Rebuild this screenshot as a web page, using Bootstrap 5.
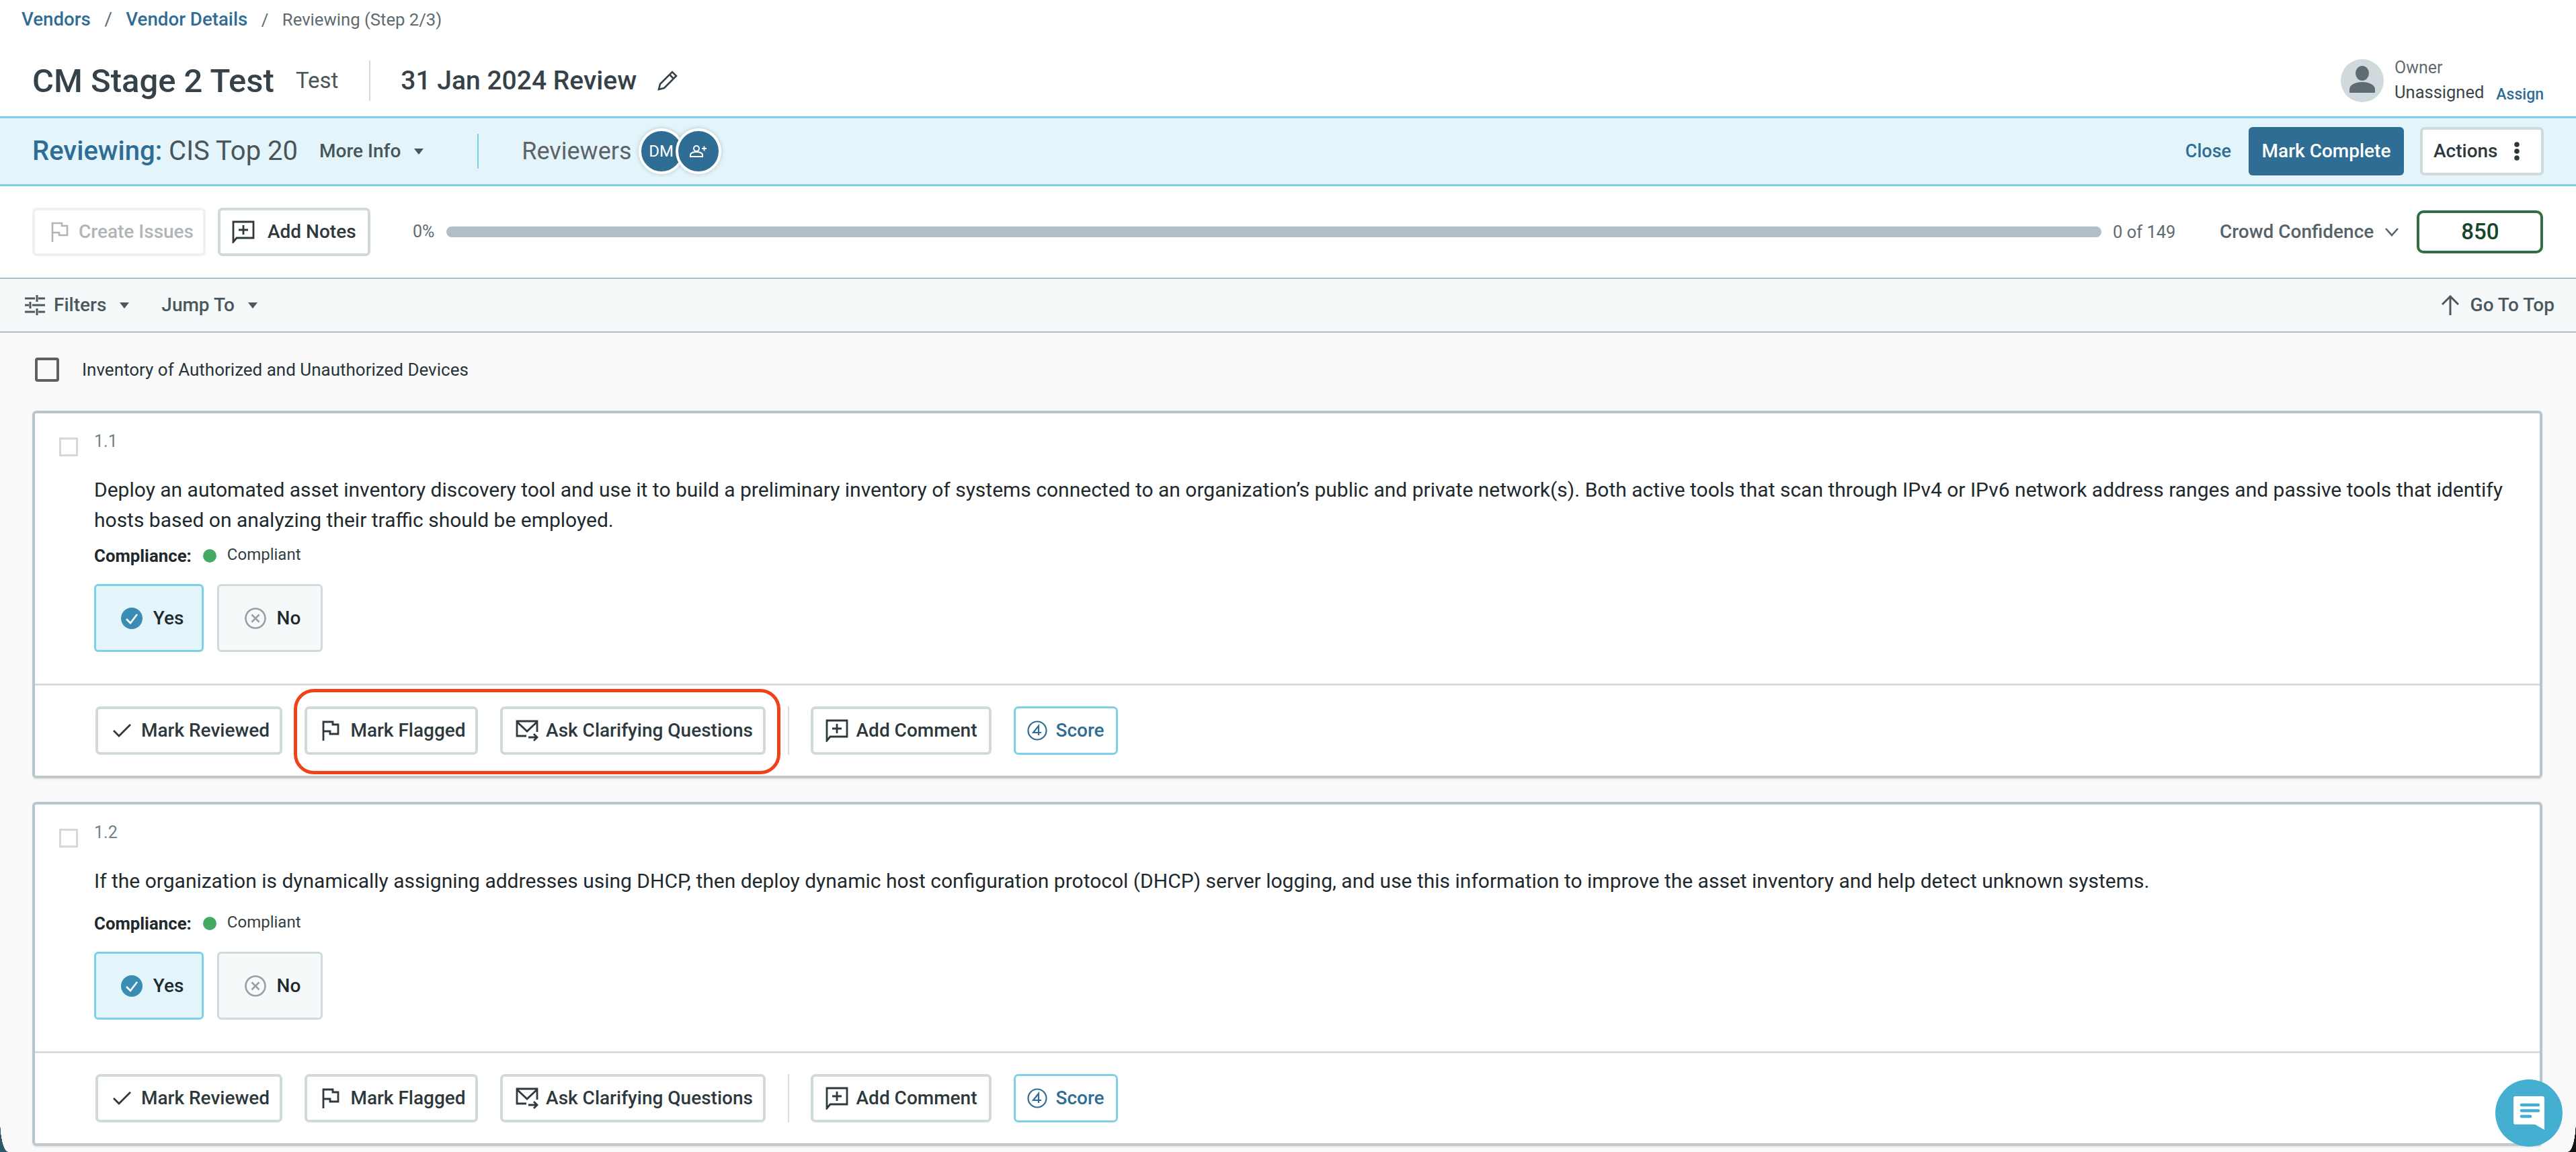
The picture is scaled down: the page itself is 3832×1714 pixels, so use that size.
<!DOCTYPE html>
<html lang="en">
<head>
  <meta charset="UTF-8">
  <title>Reviewing</title>
  <link href="https://cdn.jsdelivr.net/npm/bootstrap@5.3.0/dist/css/bootstrap.min.css" rel="stylesheet">
  <style>
    html, body { height: 100%; }
    body { font-family: Roboto, "Liberation Sans", sans-serif; background: #f9f9f9; color: #1f2a2e; overflow: hidden; font-size: 28px; position: relative; }
    a { text-decoration: none; color: #2f6d95; }
    .top-strip { background: #fff; padding: 0 48px; height: 173px; }
    .crumbs { height: 58px; margin-left: -16px; font-size: 27.7px; }
    .crumbs .breadcrumb { --bs-breadcrumb-margin-bottom: 0; --bs-breadcrumb-divider-color: #5c6b72; --bs-breadcrumb-item-active-color: #5f6b70; --bs-breadcrumb-item-padding-x: 20.5px; }
    .crumbs a { font-weight: 500; }
    .crumbs .active { font-size: 25.7px; line-height: 42px; }
    .title-line { height: 104px; margin-top: 10px; }
    .title-main { font-size: 49px; font-weight: 500; color: #36424a; margin: 0; line-height: 1; }
    .title-sub { font-size: 33px; color: #4a555a; margin-left: 32px; }
    .title-rule { width: 2px; height: 60px; background: #d5d9db; margin: 0 45px 0 46px; }
    .title-date { font-size: 39px; font-weight: 500; color: #36424a; }
    .title-pen { margin-left: 30px; }
    .owner-pic { width: 64px; height: 64px; background: #d0dadd; }
    .owner-label { font-size: 25px; color: #5f6b70; line-height: 36px; }
    .owner-name { font-size: 25.5px; color: #3a464b; line-height: 36px; }
    .assign-link { font-size: 23px; font-weight: 500; margin-left: 18px; position: relative; top: 2px; }
    .review-band { height: 104px; background: #e3f5fa; border-top: 3px solid #7dd0e6; border-bottom: 3px solid #7dd0e6; padding: 0 48px 0 48px; }
    .review-label { font-size: 40px; color: #4a555a; }
    .review-label b { font-weight: 500; color: #2f6d95; }
    .more-info { font-size: 28px; font-weight: 500; color: #4a555a; margin-left: 32px; }
    .down-caret { width: 0; height: 0; border-left: 7px solid transparent; border-right: 7px solid transparent; border-top: 9px solid currentColor; display: inline-block; margin-left: 20px; }
    .band-rule { width: 2px; height: 52px; background: #7dd0e6; margin: 0 64px 0 80px; }
    .reviewers-label { font-size: 36px; color: #5d6366; }
    .rev-stack { margin-left: 10px; }
    .rev-dot { width: 68px; height: 68px; background: #2f6d95; color: #fff; border: 4px solid #fff; font-size: 24px; box-shadow: 0 0 6px rgba(0,0,0,.2); }
    .rev-dot + .rev-dot { margin-left: -13px; }
    .close-link { font-size: 27px; font-weight: 500; margin-right: 26px; }
    .plain-btn { font-family: inherit; font-size: 28px; font-weight: 500; color: #2e393e; background: #fff; border: 4px solid #d0dadd; border-radius: 7px; height: 72px; line-height: 1; padding: 0 18px; white-space: nowrap; }
    .plain-btn svg { flex: none; }
    .blue-btn { background: #2f6d95; color: #fff; border: 0; border-radius: 6px; height: 72px; width: 231px; font-size: 28px; font-weight: 500; }
    .actions-btn { width: 184px; margin-left: 24px; padding: 0 0 0 16px; gap: 24px; }
    .tool-row { height: 136px; background: #fff; padding: 0 48px; }
    .faded-btn { width: 258px; color: #b0b5b8; border-color: #eef1f2; padding-left: 24px; gap: 15px; }
    .notes-btn { width: 227px; margin-left: 18px; padding-left: 17px; gap: 19px; }
    .pct-text { font-size: 25px; color: #5f6b70; margin-left: 63px; width: 50px; }
    .prog-track { height: 16px; width: 2462px; background: #b0bfc7; border-radius: 8px; }
    .count-text { font-size: 25.5px; color: #5f6b70; margin-left: 17px; width: 159px; white-space: nowrap; }
    .crowd-text { font-size: 28px; font-weight: 500; color: #55636a; white-space: nowrap; }
    .score-box { width: 188px; height: 64px; border: 4px solid #2e7040; border-radius: 10px; font-size: 33px; font-weight: 500; color: #17452a; margin-left: 26px; }
    .filter-row { height: 82px; background: #f5f9fa; border-top: 2px solid #b0bfc7; border-bottom: 2px solid #b0bfc7; padding: 0 32px 0 37px; font-size: 28px; font-weight: 500; color: #4b585e; }
    .filter-ico { margin-right: 13px; }
    .group-row { height: 116px; padding: 0 0 6px 52px; font-size: 26px; color: #27343a; }
    .group-box { width: 36px; height: 36px; border: 4px solid #5a6063; border-radius: 4px; margin-right: 34px; }
    .req-card { background: #fff; margin: 0 50px 35px 48px; border: 4px solid #b8c5cc; border-bottom-color: #c0c7ca; border-radius: 6px; box-shadow: 0 2px 2px rgba(0,0,0,.08); }
    .req-body { padding: 24px 40px 0 36px; height: 402px; }
    .req-body.short-body { height: 367px; }
    .req-body.short-body .comp-line { margin-top: 18px; }
    .req-box { width: 28px; height: 28px; border: 3px solid #d5d8da; margin-top: 12px; flex: none; }
    .req-num { font-size: 25px; color: #71838d; margin-left: 24px; line-height: 36px; }
    .req-text { font-size: 30px; line-height: 45px; color: #1f2a2e; margin: 27px 0 0 52px; }
    .comp-line { margin: 8px 0 0 52px; height: 46px; }
    .comp-label { font-size: 25.8px; font-weight: 700; color: #1f2a2e; }
    .comp-dot { width: 20px; height: 20px; background: #43ab61; margin: 0 16px 0 17px; }
    .comp-value { font-size: 24px; color: #333f44; position: relative; top: -2px; }
    .answer-row { margin: 19px 0 0 52px; gap: 20px; }
    .answer-btn { height: 101px; font-size: 28px; font-weight: 500; color: #1f2a2e; border-radius: 6px; gap: 16px; padding: 0; }
    .yes-btn { width: 163px; background: #e3f5fa; border: 3px solid #7dd0e6; padding-left: 10px; }
    .no-btn { width: 157px; background: #f5f9fa; border: 3px solid #d0dadd; padding-left: 8px; }
    .req-foot { border-top: 3px solid #d9dcdd; height: 137px; padding: 31px 0 0 90px; }
    .foot-btn { height: 72px; gap: 12px; padding: 0; justify-content: center; }
    .foot-rule { width: 2px; height: 72px; background: #d9dcdd; margin: 0 32px 0 33px; }
    .w-reviewed { width: 278px; margin-right: 33px; padding-left: 7px; gap: 15px; }
    .w-flagged { width: 258px; margin-right: 33px; padding-left: 8px; gap: 16px; }
    .w-ask { width: 395px; padding-left: 4px; gap: 11px; }
    .w-comment { width: 269px; margin-right: 34px; }
    .w-score { width: 155px; border: 3px solid #7dd0e6; color: #2f6d95; margin-left: -1px; }
    .red-ring { position: absolute; left: 437px; top: 1025px; width: 724px; height: 127px; border: 5px solid #f0411a; border-radius: 30px; pointer-events: none; }
    .chat-fab { position: absolute; left: 3712px; top: 1606px; width: 100px; height: 100px; background: #45afd2; }
    .win-corner { position: absolute; bottom: 0; width: 12px; height: 48px; }
    .win-corner.left-c { left: 0; background: radial-gradient(ellipse 12px 48px at 100% 0, transparent 98%, #2c5a6a 100%); }
    .win-corner.right-c { right: 0; background: radial-gradient(ellipse 12px 48px at 0 0, transparent 98%, #111 100%); }
  </style>
</head>
<body>
  <div class="top-strip">
    <nav class="crumbs d-flex align-items-center">
      <ol class="breadcrumb align-items-center">
        <li class="breadcrumb-item"><a href="#">Vendors</a></li>
        <li class="breadcrumb-item"><a href="#">Vendor Details</a></li>
        <li class="breadcrumb-item active">Reviewing (Step 2/3)</li>
      </ol>
    </nav>
    <div class="title-line d-flex align-items-center justify-content-between">
      <div class="d-flex align-items-center">
        <h1 class="title-main">CM Stage 2 Test</h1>
        <span class="title-sub">Test</span>
        <span class="title-rule"></span>
        <span class="title-date">31 Jan 2024 Review</span>
        <svg class="title-pen" width="32" height="32" viewBox="0 0 32 32" fill="none" stroke="#36424a" stroke-width="2.6"><path d="M3 29l2-8L23 3l6 6L11 27z"/><path d="M19 7l6 6"/></svg>
      </div>
      <div class="d-flex align-items-center">
        <span class="owner-pic rounded-circle d-flex align-items-center justify-content-center me-3">
          <svg width="40" height="44" viewBox="0 0 40 44" fill="#5f6d72"><ellipse cx="20" cy="11" rx="10" ry="11"/><path d="M1 40v-5c0-7 9-11 19-11s19 4 19 11v5z"/></svg>
        </span>
        <div>
          <div class="owner-label">Owner</div>
          <div class="owner-name">Unassigned<a class="assign-link" href="#">Assign</a></div>
        </div>
      </div>
    </div>
  </div>

  <div class="review-band d-flex align-items-center justify-content-between">
    <div class="d-flex align-items-center">
      <span class="review-label"><b>Reviewing:</b> CIS Top 20</span>
      <span class="more-info d-flex align-items-center">More Info<i class="down-caret"></i></span>
      <span class="band-rule"></span>
      <span class="reviewers-label">Reviewers</span>
      <div class="rev-stack d-flex">
        <span class="rev-dot rounded-circle d-flex align-items-center justify-content-center">DM</span>
        <span class="rev-dot rounded-circle d-flex align-items-center justify-content-center">
          <svg width="25" height="18" viewBox="0 0 25 18" fill="none" stroke="#fff" stroke-width="2"><circle cx="10" cy="5" r="4"/><path d="M1 17v-3c0-2 4-4 9-4s9 2 9 4v3z"/><path d="M18 5h7M21.500 1.500v7"/></svg>
        </span>
      </div>
    </div>
    <div class="d-flex align-items-center">
      <a class="close-link" href="#">Close</a>
      <button class="blue-btn" type="button">Mark Complete</button>
      <button class="plain-btn actions-btn d-flex align-items-center" type="button">Actions
        <svg width="8" height="28" viewBox="0 0 8 28" fill="#2e393e"><circle cx="4" cy="4" r="3.800"/><circle cx="4" cy="14" r="3.800"/><circle cx="4" cy="24" r="3.800"/></svg>
      </button>
    </div>
  </div>

  <div class="tool-row d-flex align-items-center">
    <button class="plain-btn faded-btn d-flex align-items-center" type="button" disabled>
      <svg width="26" height="30" viewBox="0 0 26 30" fill="none" stroke="#b0b5b8" stroke-width="2.6"><path d="M2 30V2h14v4h8v14H12v-4H2"/></svg>
      Create Issues
    </button>
    <button class="plain-btn notes-btn d-flex align-items-center" type="button">
      <svg width="34" height="34" viewBox="0 0 34 34" fill="none" stroke="#2e393e" stroke-width="2.8"><path d="M2 32V2h30v24H7z"/><path d="M17 7v14M10 14h14"/></svg>
      Add Notes
    </button>
    <span class="pct-text">0%</span>
    <div class="prog-track"></div>
    <span class="count-text">0 of 149</span>
    <span class="crowd-text">Crowd Confidence</span>
    <svg class="ms-3" width="22" height="14" viewBox="0 0 22 14" fill="none" stroke="#55636a" stroke-width="2.6"><path d="M2 2l9 10 9-10"/></svg>
    <span class="score-box d-flex align-items-center justify-content-center">850</span>
  </div>

  <div class="filter-row d-flex align-items-center justify-content-between">
    <div class="d-flex align-items-center">
      <svg class="filter-ico" width="30" height="30" viewBox="0 0 30 30" fill="none" stroke="#4b585e" stroke-width="3"><path d="M0 5h15M20 5h10M18 0v10M0 15h6M11 15h19M8 10v10M0 25h15M20 25h10M18 20v10"/></svg>
      <span>Filters</span><i class="down-caret"></i>
      <span class="ms-5">Jump To</span><i class="down-caret"></i>
    </div>
    <div class="d-flex align-items-center">
      <svg class="me-3" width="28" height="30" viewBox="0 0 28 30" fill="none" stroke="#4b585e" stroke-width="3"><path d="M14 30V3M2 14L14 2l12 12"/></svg>
      <span>Go To Top</span>
    </div>
  </div>

  <div class="group-row d-flex align-items-center">
    <span class="group-box"></span>
    <span>Inventory of Authorized and Unauthorized Devices</span>
  </div>

  <section class="req-card">
    <div class="req-body">
      <div class="d-flex"><span class="req-box"></span><span class="req-num">1.1</span></div>
      <p class="req-text">Deploy an automated asset inventory discovery tool and use it to build a preliminary inventory of systems connected to an organization’s public and private network(s). Both active tools that scan through IPv4 or IPv6 network address ranges and passive tools that identify hosts based on analyzing their traffic should be employed.</p>
      <div class="comp-line d-flex align-items-center">
        <span class="comp-label">Compliance:</span><span class="comp-dot rounded-circle"></span><span class="comp-value">Compliant</span>
      </div>
      <div class="answer-row d-flex">
        <button class="answer-btn yes-btn d-flex align-items-center justify-content-center" type="button">
          <svg width="32" height="32" viewBox="0 0 32 32"><circle cx="16" cy="16" r="16" fill="#3a8cb3"/><path d="M8 17l6 6 10-13" fill="none" stroke="#fff" stroke-width="2.6"/></svg>Yes
        </button>
        <button class="answer-btn no-btn d-flex align-items-center justify-content-center" type="button">
          <svg width="32" height="32" viewBox="0 0 32 32" fill="none" stroke="#9a9fa2" stroke-width="2.6"><circle cx="16" cy="16" r="14.500"/><path d="M10.500 10.500l11 11M21.500 10.500l-11 11"/></svg>No
        </button>
      </div>
    </div>
    <div class="req-foot d-flex">
      <button class="plain-btn foot-btn w-reviewed d-flex align-items-center" type="button">
        <svg width="27" height="20" viewBox="0 0 27 20" fill="none" stroke="#2e393e" stroke-width="2.8"><path d="M1 10l8 8L26 1"/></svg>Mark Reviewed
      </button>
      <button class="plain-btn foot-btn w-flagged d-flex align-items-center" type="button">
        <svg width="26" height="30" viewBox="0 0 26 30" fill="none" stroke="#2e393e" stroke-width="2.8"><path d="M2 30V2h14v4h8v14H12v-4H2"/></svg>Mark Flagged
      </button>
      <button class="plain-btn foot-btn w-ask d-flex align-items-center" type="button">
        <svg width="34" height="32" viewBox="0 0 34 32" fill="none" stroke="#2e393e" stroke-width="2.8"><path d="M16 24H2V2h30v16M2 3l15 14L32 3M19 26h13M27 21l5 5-5 5"/></svg>Ask Clarifying Questions
      </button>
      <span class="foot-rule"></span>
      <button class="plain-btn foot-btn w-comment d-flex align-items-center" type="button">
        <svg width="34" height="34" viewBox="0 0 34 34" fill="none" stroke="#2e393e" stroke-width="2.8"><path d="M2 32V2h30v24H7z"/><path d="M17 7v14M10 14h14"/></svg>Add Comment
      </button>
      <button class="plain-btn foot-btn w-score d-flex align-items-center" type="button">
        <svg width="30" height="30" viewBox="0 0 30 30" fill="none" stroke="#2f6d95" stroke-width="2.2"><circle cx="15" cy="15" r="13.500"/><path d="M17 22V8l-8 10h12"/></svg>Score
      </button>
    </div>
  </section>

  <section class="req-card">
    <div class="req-body short-body">
      <div class="d-flex"><span class="req-box"></span><span class="req-num">1.2</span></div>
      <p class="req-text">If the organization is dynamically assigning addresses using DHCP, then deploy dynamic host configuration protocol (DHCP) server logging, and use this information to improve the asset inventory and help detect unknown systems.</p>
      <div class="comp-line d-flex align-items-center">
        <span class="comp-label">Compliance:</span><span class="comp-dot rounded-circle"></span><span class="comp-value">Compliant</span>
      </div>
      <div class="answer-row d-flex">
        <button class="answer-btn yes-btn d-flex align-items-center justify-content-center" type="button">
          <svg width="32" height="32" viewBox="0 0 32 32"><circle cx="16" cy="16" r="16" fill="#3a8cb3"/><path d="M8 17l6 6 10-13" fill="none" stroke="#fff" stroke-width="2.6"/></svg>Yes
        </button>
        <button class="answer-btn no-btn d-flex align-items-center justify-content-center" type="button">
          <svg width="32" height="32" viewBox="0 0 32 32" fill="none" stroke="#9a9fa2" stroke-width="2.6"><circle cx="16" cy="16" r="14.500"/><path d="M10.500 10.500l11 11M21.500 10.500l-11 11"/></svg>No
        </button>
      </div>
    </div>
    <div class="req-foot d-flex">
      <button class="plain-btn foot-btn w-reviewed d-flex align-items-center" type="button">
        <svg width="27" height="20" viewBox="0 0 27 20" fill="none" stroke="#2e393e" stroke-width="2.8"><path d="M1 10l8 8L26 1"/></svg>Mark Reviewed
      </button>
      <button class="plain-btn foot-btn w-flagged d-flex align-items-center" type="button">
        <svg width="26" height="30" viewBox="0 0 26 30" fill="none" stroke="#2e393e" stroke-width="2.8"><path d="M2 30V2h14v4h8v14H12v-4H2"/></svg>Mark Flagged
      </button>
      <button class="plain-btn foot-btn w-ask d-flex align-items-center" type="button">
        <svg width="34" height="32" viewBox="0 0 34 32" fill="none" stroke="#2e393e" stroke-width="2.8"><path d="M16 24H2V2h30v16M2 3l15 14L32 3M19 26h13M27 21l5 5-5 5"/></svg>Ask Clarifying Questions
      </button>
      <span class="foot-rule"></span>
      <button class="plain-btn foot-btn w-comment d-flex align-items-center" type="button">
        <svg width="34" height="34" viewBox="0 0 34 34" fill="none" stroke="#2e393e" stroke-width="2.8"><path d="M2 32V2h30v24H7z"/><path d="M17 7v14M10 14h14"/></svg>Add Comment
      </button>
      <button class="plain-btn foot-btn w-score d-flex align-items-center" type="button">
        <svg width="30" height="30" viewBox="0 0 30 30" fill="none" stroke="#2f6d95" stroke-width="2.2"><circle cx="15" cy="15" r="13.500"/><path d="M17 22V8l-8 10h12"/></svg>Score
      </button>
    </div>
  </section>

  <div class="red-ring"></div>
  <div class="chat-fab rounded-circle d-flex align-items-center justify-content-center">
    <svg width="46" height="50" viewBox="0 0 46 50"><path d="M3 0h40a3 3 0 0 1 3 3v47l-14-8H3a3 3 0 0 1-3-3V3a3 3 0 0 1 3-3z" fill="#fff"/><path d="M12 13h25M12 21.500h25M12 30h13" stroke="#45afd2" stroke-width="4.500" stroke-linecap="round"/></svg>
  </div>
  <span class="win-corner left-c"></span>
  <span class="win-corner right-c"></span>
  <script src="https://cdn.jsdelivr.net/npm/bootstrap@5.3.0/dist/js/bootstrap.bundle.min.js"></script>
</body>
</html>
